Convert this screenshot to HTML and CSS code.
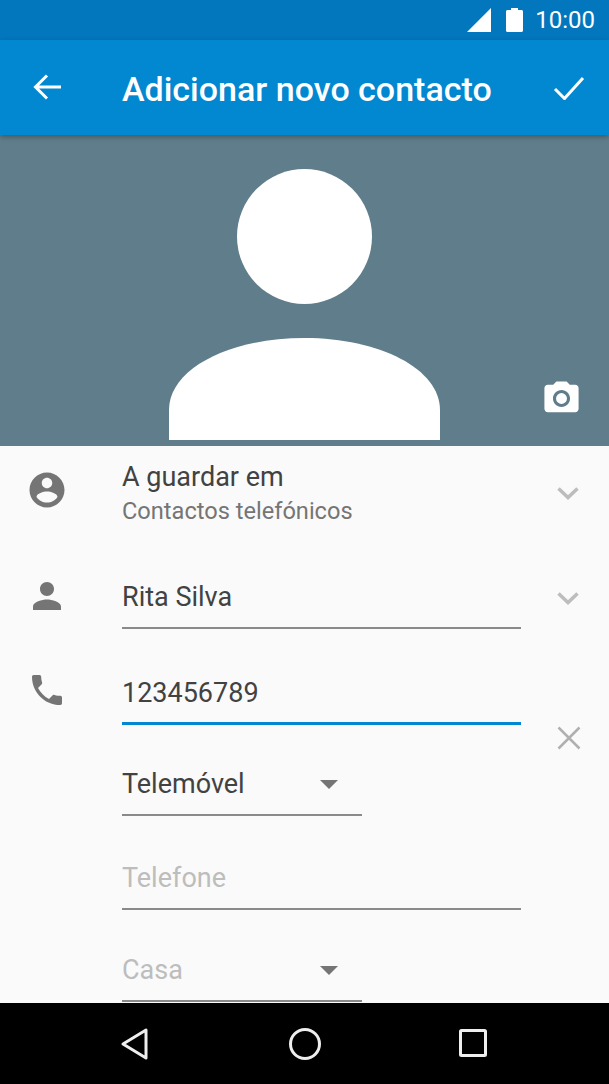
FILE: index.html
```html
<!DOCTYPE html>
<html lang="pt">
<head>
    <meta charset="UTF-8">
    <title>Adicionar novo contacto</title>
    <link rel="stylesheet" href="styles.css">
</head>
<body>
  <div class="phone">

    <div class="statusbar">
      <svg class="signal" width="24" height="24" viewBox="0 0 24 24"><path d="M0 24L24 0v24z"/></svg>
      <svg class="battery" width="17" height="24" viewBox="0 0 17 24"><path d="M5 0h7v2h3.500c.8 0 1.500.7 1.500 1.500v19c0 .8-.7 1.500-1.500 1.500h-14C.7 24 0 23.300 0 22.500v-19C0 2.700.7 2 1.500 2H5z"/></svg>
      <span class="time">10:00</span>
    </div>

    <div class="appbar">
      <svg class="back" width="30" height="30" viewBox="0 0 30 30"><path d="M28 15H3M14 3.500L2.500 15 14 26.500"/></svg>
      <div class="title">Adicionar novo contacto</div>
      <svg class="done" width="32" height="24" viewBox="0 0 32 24"><path d="M2 13l9.500 9.500L30 2"/></svg>
    </div>

    <div class="photo">
      <svg class="avatar" width="271" height="271" viewBox="0 0 271 271">
        <circle cx="135.500" cy="67.500" r="67.500"/>
        <path d="M0 271v-30C0 200 60 169 135.500 169S271 200 271 241v30z"/>
      </svg>
      <svg class="camera" width="41" height="41" viewBox="0 0 24 24"><path fill-rule="evenodd" d="M9 2L7.170 4H4c-1.100 0-2 .9-2 2v12c0 1.100.9 2 2 2h16c1.100 0 2-.9 2-2V6c0-1.100-.9-2-2-2h-3.170L15 2H9zm3 15c-2.760 0-5-2.240-5-5s2.240-5 5-5 5 2.240 5 5-2.240 5-5 5zm0-1.800a3.200 3.200 0 1 0 0-6.400 3.200 3.200 0 0 0 0 6.400z"/></svg>
    </div>

    <div class="form">
      <div class="icon-cell icon-account">
        <svg class="icon" width="42" height="42" viewBox="0 0 24 24"><path d="M12 2C6.480 2 2 6.480 2 12s4.480 10 10 10 10-4.480 10-10S17.520 2 12 2zm0 3c1.660 0 3 1.340 3 3s-1.340 3-3 3-3-1.340-3-3 1.340-3 3-3zm0 14.200c-2.500 0-4.710-1.280-6-3.220.03-1.990 4-3.080 6-3.080 1.990 0 5.970 1.090 6 3.080-1.290 1.940-3.500 3.220-6 3.220z"/></svg>
      </div>
      <div class="account">
        <div class="account-label">A guardar em</div>
        <div class="account-sub">Contactos telefónicos</div>
      </div>
      <div class="more more-account">
        <svg width="22" height="13" viewBox="0 0 22 13"><path d="M1.500 1.500L11 10.500l9.500-9"/></svg>
      </div>

      <div class="icon-cell icon-name">
        <svg class="icon" width="42" height="42" viewBox="0 0 24 24"><path d="M12 12c2.210 0 4-1.790 4-4s-1.790-4-4-4-4 1.790-4 4 1.790 4 4 4zm0 2c-2.670 0-8 1.340-8 4v2h16v-2c0-2.660-5.330-4-8-4z"/></svg>
      </div>
      <div class="field field-name">Rita Silva</div>
      <div class="more more-name">
        <svg width="22" height="13" viewBox="0 0 22 13"><path d="M1.500 1.500L11 10.500l9.500-9"/></svg>
      </div>

      <div class="icon-cell icon-phone">
        <svg class="icon" width="40" height="40" viewBox="0 0 24 24"><path d="M6.620 10.790c1.440 2.830 3.760 5.140 6.590 6.590l2.200-2.200c.27-.27.67-.36 1.020-.24 1.120.37 2.330.57 3.570.57.550 0 1 .45 1 1V20c0 .55-.45 1-1 1-9.390 0-17-7.610-17-17 0-.55.450-1 1-1h3.500c.55 0 1 .45 1 1 0 1.250.2 2.450.57 3.570.11.350.03.740-.25 1.020l-2.200 2.200z"/></svg>
      </div>
      <div class="field field-phone">123456789</div>

      <div class="field field-short field-type">
        <span>Telemóvel</span>
        <span class="caret"></span>
      </div>
      <div class="clear">
        <svg width="24" height="24" viewBox="0 0 24 24"><path d="M1.500 1.500l21 21M22.500 1.500l-21 21"/></svg>
      </div>

      <div class="field field-empty field-tel">Telefone</div>

      <div class="field field-short field-empty field-casa">
        <span>Casa</span>
        <span class="caret"></span>
      </div>
    </div>

    <div class="navbar">
      <svg width="30" height="34" viewBox="0 0 30 34"><path d="M26 3v28L3 17z"/></svg>
      <svg width="34" height="34" viewBox="0 0 34 34"><circle cx="17" cy="17" r="14.500"/></svg>
      <svg width="30" height="30" viewBox="0 0 30 30"><rect x="1.500" y="1.500" width="25" height="25" rx="1"/></svg>
    </div>

  </div>
</body>
</html>
```

FILE: styles.css
```css
* {
    box-sizing: border-box;
}

html, body {
    margin: 0;
    padding: 0;
}

body {
    font-family: Roboto, "Liberation Sans", sans-serif;
    background-color: #fafafa;
}

.phone {
    width: 609px;
    height: 1084px;
    display: flex;
    flex-direction: column;
    overflow: hidden;
}

.statusbar {
    height: 40px;
    background-color: #0277bd;
    display: flex;
    align-items: center;
    justify-content: flex-end;
    padding-right: 14px;
    color: #fff;
    flex-shrink: 0;
}

.statusbar svg {
    fill: #fff;
}

.signal {
    margin-right: 15px;
}

.battery {
    margin-right: 12px;
}

.time {
    font-size: 24px;
}

.appbar {
    height: 95px;
    background-color: #0288d1;
    display: flex;
    align-items: center;
    padding: 0 24px 0 33px;
    color: #fff;
    position: relative;
    z-index: 2;
    box-shadow: 0 2px 5px rgba(0, 0, 0, 0.3);
    flex-shrink: 0;
}

.appbar svg {
    fill: none;
    stroke: #fff;
    stroke-width: 3;
}

.back {
    margin-bottom: 2px;
}

.title {
    flex: 1;
    margin-left: 59px;
    padding-top: 2px;
    font-size: 34px;
    font-weight: 500;
}

.photo {
    height: 311px;
    background-color: #607d8b;
    position: relative;
    display: flex;
    justify-content: center;
    padding-top: 34px;
    flex-shrink: 0;
}

.avatar {
    fill: #fff;
}

.camera {
    position: absolute;
    right: 27px;
    top: 243px;
    fill: #fff;
}

.form {
    height: 557px;
    background-color: #fafafa;
    overflow: hidden;
    display: grid;
    grid-template-columns: 122px 399px 88px;
    grid-template-rows: 109px 74px 96px 91px 94px 92px;
    flex-shrink: 0;
}

.icon-cell {
    grid-column: 1;
    display: flex;
    justify-content: center;
    width: 94px;
}

.icon {
    fill: #757575;
}

.icon-account {
    grid-row: 1;
    padding-top: 23px;
}

.icon-name {
    grid-row: 2;
    padding-top: 20px;
}

.icon-phone {
    grid-row: 3;
    padding-top: 41px;
}

.account {
    grid-column: 2;
    grid-row: 1;
    padding-top: 16px;
}

.account-label {
    font-size: 27px;
    line-height: 30px;
    color: #424242;
}

.account-sub {
    font-size: 23.600px;
    line-height: 28px;
    margin-top: 5px;
    color: #757575;
}

.more {
    grid-column: 3;
    padding-left: 36px;
}

.more svg {
    fill: none;
    stroke: #bdbdbd;
    stroke-width: 3.500;
}

.more-account {
    grid-row: 1;
    padding-top: 39px;
}

.more-name {
    grid-row: 2;
    padding-top: 35px;
}

.field {
    grid-column: 2;
    display: flex;
    align-items: center;
    justify-content: space-between;
    align-self: end;
    height: 48px;
    padding-bottom: 14px;
    font-size: 27px;
    color: #424242;
    border-bottom: 2px solid #8a8a8a;
}

.field-name {
    grid-row: 2;
}

.field-phone {
    grid-row: 3;
    border-bottom: 3px solid #0288d1;
}

.field-short {
    width: 240px;
    padding-right: 24px;
}

.field-type {
    grid-row: 4;
}

.field-tel {
    grid-row: 5;
}

.field-casa {
    grid-row: 6;
}

.field-empty {
    color: #bdbdbd;
}

.caret {
    width: 0;
    height: 0;
    border-left: 9px solid transparent;
    border-right: 9px solid transparent;
    border-top: 9px solid #757575;
}

.clear {
    grid-column: 3;
    grid-row: 4;
    padding: 1px 0 0 36px;
}

.clear svg {
    fill: none;
    stroke: #b0b0b0;
    stroke-width: 2.500;
}

.navbar {
    height: 81px;
    background-color: #000;
    display: flex;
    align-items: center;
    justify-content: space-between;
    padding: 0 120px;
    flex-shrink: 0;
}

.navbar svg {
    fill: none;
    stroke: #eee;
    stroke-width: 3;
    stroke-linejoin: round;
}
```
